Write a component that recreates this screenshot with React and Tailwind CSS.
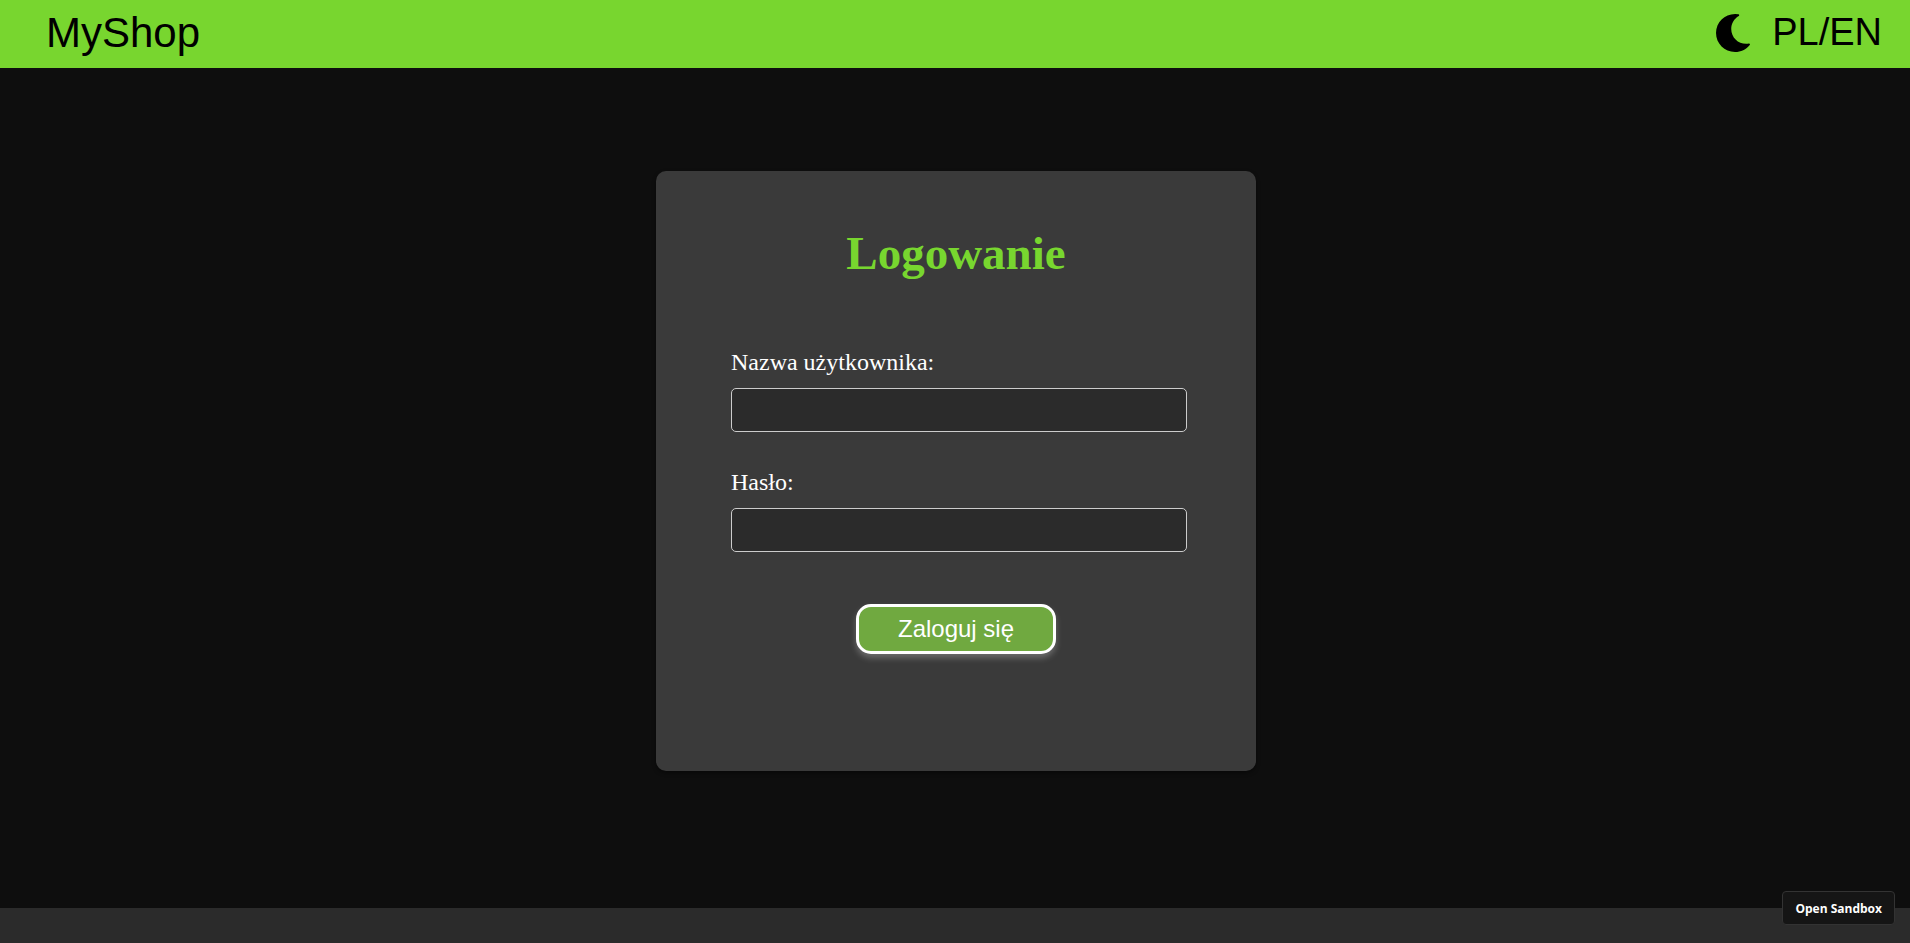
export default function App() {
  return (
    <div className="flex min-h-screen flex-col bg-[#0e0e0e]">
      <header className="flex h-17 items-center justify-between bg-[#78d62f] pr-7 pb-0.5 pl-[46px] font-['Liberation_Sans',sans-serif] text-black">
        <a href="#" className="text-[42px] leading-16">MyShop</a>
        <div className="flex items-center gap-5">
          <button type="button" aria-label="Motyw" className="flex size-[38px] items-center justify-center">
            <svg viewBox="0 0 512 512" className="size-[38px] fill-current" aria-hidden="true">
              <path d="M283.211 512c78.962 0 151.079-35.925 198.857-94.792 7.068-8.708-.639-21.43-11.562-19.35-124.203 23.654-238.262-71.576-238.262-196.954 0-72.222 38.662-138.635 101.498-174.394 9.686-5.512 7.25-20.197-3.756-22.23A258.156 258.156 0 0 0 283.211 0c-141.309 0-256 114.511-256 256 0 141.309 114.511 256 256 256z" />
            </svg>
          </button>
          <button type="button" className="pb-0.5 text-[38px] leading-15">PL/EN</button>
        </div>
      </header>

      <main className="flex grow items-center justify-center pt-1.5 pr-4 pb-10 pl-[18px]">
        <form className="flex min-h-[600px] w-full max-w-[600px] flex-col items-center rounded-[10px] bg-[#3a3a3a] pt-[58px] font-['Liberation_Serif',serif] shadow-[0_2px_4px_rgba(0,0,0,0.4)]">
          <h1 className="text-[47px] leading-12 font-bold text-[#78d62f]">Logowanie</h1>
          <div className="mt-[69px] flex w-full flex-col gap-[34px] pr-[69px] pl-[75px]">
            <div className="flex flex-col gap-2.5">
              <label htmlFor="username" className="text-2xl text-white">Nazwa użytkownika:</label>
              <input id="username" type="text" className="h-11 rounded-[5px] border border-[#cccccc] bg-[#2b2b2b] px-3 text-xl text-white" />
            </div>
            <div className="flex flex-col gap-2.5">
              <label htmlFor="password" className="text-2xl text-white">Hasło:</label>
              <input id="password" type="password" className="h-11 rounded-[5px] border border-[#cccccc] bg-[#2b2b2b] px-3 text-xl text-white" />
            </div>
          </div>
          <button type="submit" className="mt-13 h-[50px] w-[200px] rounded-[15px] border-3 border-white bg-[#70a940] font-['Liberation_Sans',sans-serif] text-2xl text-white shadow-[0_4px_6px_rgba(255,255,255,0.25)]">
            Zaloguj się
          </button>
        </form>
      </main>

      <footer className="h-[35px] bg-[#2b2b2b]" />
      <a href="#" className="fixed right-[15px] bottom-[18px] flex h-[34px] items-center rounded border border-[#333333] bg-[#151515] px-3 pt-0.5 font-['Open_Sans',sans-serif] text-xs font-bold text-white">
        Open Sandbox
      </a>
    </div>
  );
}
